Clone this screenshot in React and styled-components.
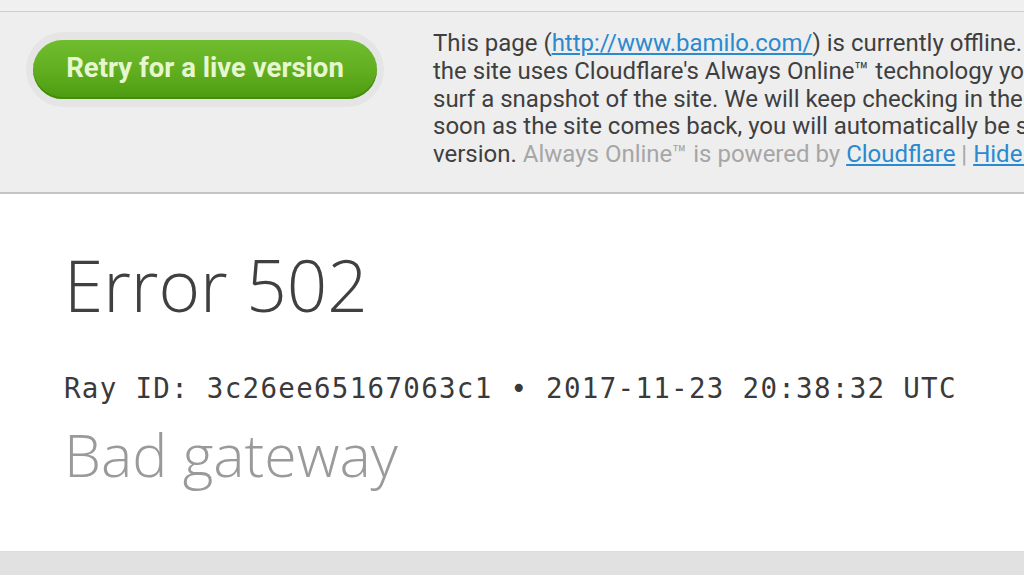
import React from 'react';
import styled, { createGlobalStyle } from 'styled-components';

const GlobalStyle = createGlobalStyle`
  html, body {
    margin: 0;
    padding: 0;
    background: #ffffff;
    overflow: hidden;
  }
  body {
    width: 1024px;
    height: 575px;
    font-family: Roboto, "Liberation Sans", sans-serif;
  }
`;

const Page = styled.div`
  display: flex;
  flex-direction: column;
  width: 1024px;
  height: 575px;
  overflow: hidden;
`;

const TopStrip = styled.div`
  height: 11px;
  background: #f0f0f0;
  border-bottom: 1px solid #cfcfcf;
  flex: none;
`;

const Banner = styled.div`
  display: flex;
  align-items: flex-start;
  flex: none;
  height: 182px;
  box-sizing: border-box;
  padding: 20px 0 0 26px;
  background: #eeeeee;
  border-bottom: 2px solid #c4c4c4;
  overflow: hidden;
`;

const Halo = styled.div`
  flex: none;
  padding: 8px 7px;
  border-radius: 40px;
  background: #e5e5e5;
`;

const RetryButton = styled.button`
  display: flex;
  align-items: center;
  justify-content: center;
  width: 344px;
  height: 59px;
  border: none;
  border-radius: 30px;
  background: linear-gradient(#70bd2f 0%, #60ae1f 55%, #4c9a10 100%);
  box-shadow: inset 0 -2px 0 #458c0d;
  color: #e6f7d0;
  font-family: Roboto, "Liberation Sans", sans-serif;
  font-weight: 700;
  font-size: 27.5px;
  padding: 0 0 5px;
  cursor: pointer;
`;

const Notice = styled.p`
  margin: -2px 0 0 49px;
  font-size: 24px;
  line-height: 27.8px;
  color: #3f3f3f;
  white-space: nowrap;
`;

const Faint = styled.span`
  color: #a6a6a6;
`;

const Link = styled.a`
  color: #2a8ad0;
  text-decoration: underline;
`;

const Main = styled.div`
  flex: 1;
  background: #ffffff;
  padding: 46px 0 0 64px;
`;

const Title = styled.h1`
  margin: 0;
  font-family: "Open Sans", sans-serif;
  font-weight: 300;
  font-size: 71px;
  line-height: 90px;
  color: #404040;
`;

const RayLine = styled.div`
  margin-top: 42px;
  font-family: "DejaVu Sans Mono", monospace;
  font-size: 27.5px;
  letter-spacing: 1.3px;
  line-height: 32px;
  color: #3a3a3a;
`;

const Subtitle = styled.h2`
  margin: 15px 0 0;
  font-family: "Open Sans", sans-serif;
  font-weight: 300;
  font-size: 59px;
  line-height: 70px;
  color: #9a9a9a;
`;

const Footer = styled.div`
  height: 23px;
  flex: none;
  background: #e1e1e1;
  border-top: 1px solid #dcdcdc;
`;

export default function App() {
  return (
    <>
      <GlobalStyle />
      <Page>
        <TopStrip />
        <Banner>
          <Halo>
            <RetryButton>Retry for a live version</RetryButton>
          </Halo>
          <Notice>
            This page (<Link href="#">http://www.bamilo.com/</Link>) is currently offline. However, because
            <br />
            the site uses Cloudflare's Always Online™ technology you can continue to
            <br />
            surf a snapshot of the site. We will keep checking in the background and, as
            <br />
            soon as the site comes back, you will automatically be served the live
            <br />
            version. <Faint>Always Online™ is powered by</Faint> <Link href="#">Cloudflare</Link>{' '}
            <Faint>|</Faint> <Link href="#">Hide this.</Link>
          </Notice>
        </Banner>
        <Main>
          <Title>Error 502</Title>
          <RayLine>Ray ID: 3c26ee65167063c1 • 2017-11-23 20:38:32 UTC</RayLine>
          <Subtitle>Bad gateway</Subtitle>
        </Main>
        <Footer />
      </Page>
    </>
  );
}
